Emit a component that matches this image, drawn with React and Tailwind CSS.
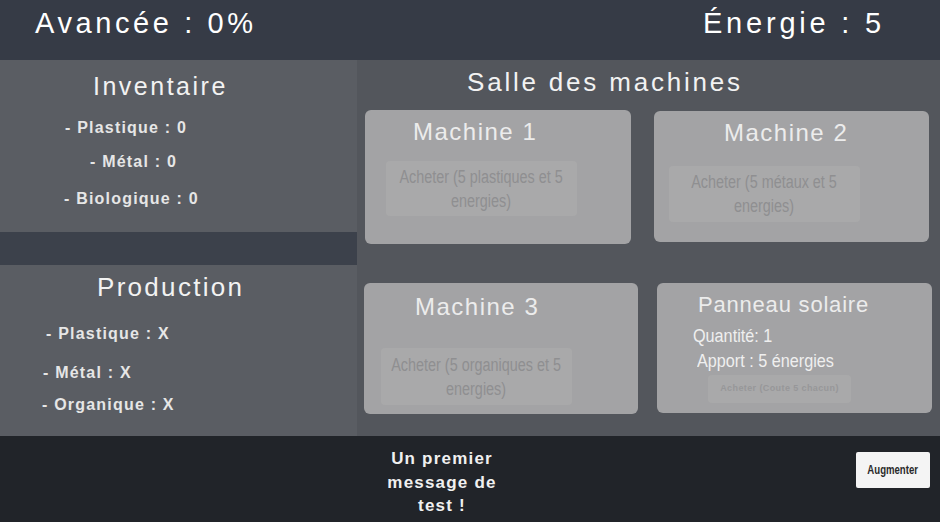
const sans = { fontFamily: '"Liberation Sans", Arial, sans-serif' };

// Unity's narrow labels: Liberation Sans squeezed horizontally
const Squeeze = ({ children, className }) => (
  <span className={`inline-block whitespace-nowrap ${className}`}>{children}</span>
);

const BuyButton = ({ children, className }) => (
  <div
    className={`flex items-center justify-center rounded-[4px] bg-[#a9a9aa] text-center text-[18px] leading-[24px] text-[#8f8f91] ${className}`}
  >
    <Squeeze className="origin-center scale-x-[0.8]">{children}</Squeeze>
  </div>
);

const Machine = ({ title, titleClass, btnClass, children, className }) => (
  <div className={`rounded-[6px] bg-[#a3a3a5] ${className}`}>
    <div className={`text-[24px] leading-[30px] tracking-[1.5px] text-[#ececec] ${titleClass}`}>{title}</div>
    <BuyButton className={btnClass}>{children}</BuyButton>
  </div>
);

const Item = ({ children, className }) => (
  <div className={`text-[16px] font-bold leading-[20px] tracking-[1.2px] text-[#e6e6e6] ${className}`}>{children}</div>
);

export default function App() {
  return (
    <div style={sans} className="flex h-[522px] w-[940px] flex-col overflow-hidden bg-[#212429] text-white">
      {/* top bar */}
      <div className="flex h-[60px] shrink-0 items-start justify-between bg-[#363b46] pl-[35px] pr-[55px] pt-[7px]">
        <div className="text-[29px] leading-[32px] tracking-[3.6px]">Avancée : 0%</div>
        <div className="text-[29px] leading-[32px] tracking-[3.8px]">Énergie : 5</div>
      </div>

      <div className="flex h-[376px] shrink-0">
        {/* left column */}
        <div className="flex w-[357px] shrink-0 flex-col">
          <div className="h-[172px] bg-[#5a5d63]">
            <div className="mt-[11px] pl-[93px] text-[25px] leading-[30px] tracking-[2.5px] text-[#f2f2f2]">Inventaire</div>
            <Item className="mt-[17px] pl-[65px]">- Plastique : 0</Item>
            <Item className="mt-[14px] pl-[90px]">- Métal : 0</Item>
            <Item className="mt-[17px] pl-[64px]">- Biologique : 0</Item>
          </div>
          <div className="h-[33px] bg-[#3c414b]" />
          <div className="h-[171px] bg-[#5a5d63]">
            <div className="mt-[7px] pl-[97px] text-[26px] leading-[30px] tracking-[2.3px] text-[#f2f2f2]">Production</div>
            <Item className="mt-[22px] pl-[46px]">- Plastique : X</Item>
            <Item className="mt-[19px] pl-[43px]">- Métal : X</Item>
            <Item className="mt-[12px] pl-[42px]">- Organique : X</Item>
          </div>
        </div>

        {/* machine room */}
        <div className="flex flex-1 flex-col bg-[#53565c]">
          <div className="flex h-[44px] items-center pl-[110px] text-[26px] leading-[30px] tracking-[2.8px] text-[#f2f2f2]">
            Salle des machines
          </div>
          <div className="mt-[6px] flex items-start pl-[8px]">
            <Machine
              className="h-[134px] w-[266px]"
              title="Machine 1"
              titleClass="pl-[48px] pt-[7px]"
              btnClass="mx-[21px] mt-[14px] h-[55px] w-[191px]"
            >
              Acheter (5 plastiques et 5<br />energies)
            </Machine>
            <Machine
              className="ml-[23px] mt-[1px] h-[131px] w-[275px]"
              title="Machine 2"
              titleClass="pl-[70px] pt-[7px]"
              btnClass="ml-[15px] mt-[18px] h-[56px] w-[191px]"
            >
              Acheter (5 métaux et 5<br />energies)
            </Machine>
          </div>
          <div className="mt-[39px] flex items-start pl-[7px]">
            <Machine
              className="h-[131px] w-[274px]"
              title="Machine 3"
              titleClass="pl-[51px] pt-[9px]"
              btnClass="ml-[17px] mt-[26px] h-[57px] w-[191px]"
            >
              Acheter (5 organiques et 5<br />energies)
            </Machine>
            <div className="ml-[19px] h-[130px] w-[275px] rounded-[6px] bg-[#a3a3a5]">
              <div className="pl-[41px] pt-[8px] text-[22px] leading-[28px] tracking-[0.8px] text-[#ececec]">Panneau solaire</div>
              <div className="mt-[7px] pl-[36px] text-[18px] leading-[20px] text-[#efefef]">
                <Squeeze className="origin-left scale-x-[0.9]">Quantité: 1</Squeeze>
              </div>
              <div className="mt-[5px] pl-[40px] text-[18px] leading-[20px] text-[#efefef]">
                <Squeeze className="origin-left scale-x-[0.9]">Apport : 5 énergies</Squeeze>
              </div>
              <div className="ml-[51px] mt-[4px] flex h-[28px] w-[143px] items-center justify-center rounded-[4px] bg-[#a9a9aa] text-[9px] font-bold tracking-[0.4px] text-[#979799]">
                Acheter (Coute 5 chacun)
              </div>
            </div>
          </div>
        </div>
      </div>

      {/* bottom bar */}
      <div className="flex flex-1 items-start">
        <div className="ml-[384px] w-[116px] pt-[11px] text-center text-[17px] font-bold leading-[23.5px] tracking-[1.2px] text-[#f0f0f0]">
          Un premier message de test !
        </div>
        <div className="flex-1" />
        <div className="mr-[10px] mt-[16px] flex h-[36px] w-[74px] items-center justify-center rounded-[2px] bg-[#f4f4f4] text-[12px] font-bold text-[#2a2a2a]">
          <Squeeze className="origin-center scale-x-[0.8]">Augmenter</Squeeze>
        </div>
      </div>
    </div>
  );
}
